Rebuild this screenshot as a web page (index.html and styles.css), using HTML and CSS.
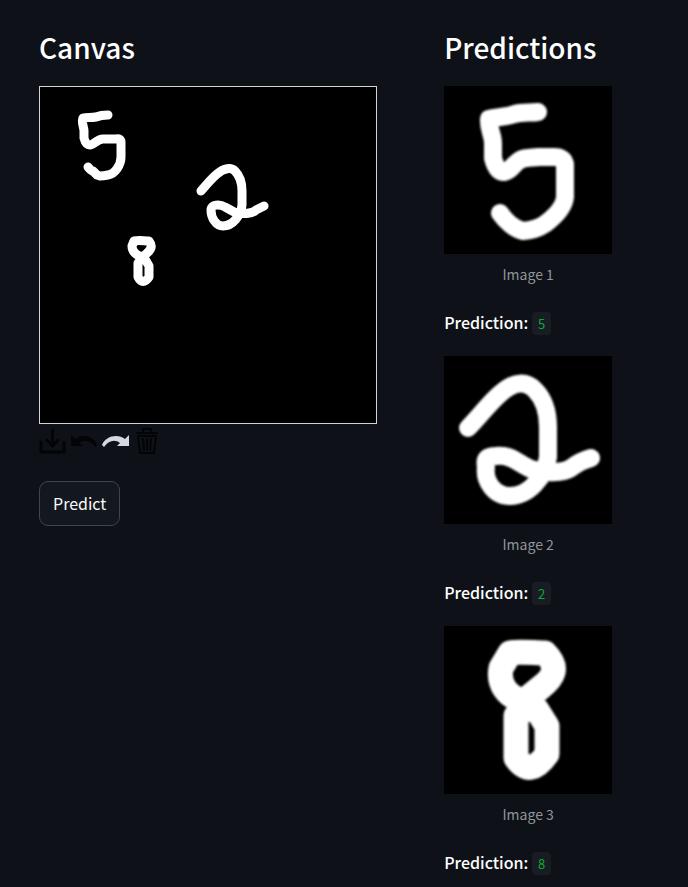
FILE: index.html
```html
<!DOCTYPE html>
<html lang="en">
<head>
<meta charset="utf-8">
<meta name="viewport" content="width=device-width, initial-scale=1">
<title>Digit recognition</title>
<link rel="stylesheet" href="styles.css">
</head>
<body>
<main class="columns">
  <section class="column">
    <h2 class="heading">Canvas</h2>
    <div class="board">
      <svg class="drawing" viewBox="40 87 336 336" role="img" aria-label="Drawing canvas">
        <g class="ink">
          <path d="M108 115C103 115 101 115 96 117C91 118 87 117 83 118C81 122 84 127 84 131V138C85 142 87 145 90 145C94 145 97 139 103 139H116Q121 138 121 142V157C121 165 115 174 108 175Q103 176 100 176L97 175L93 171Q91 171 88 167"/>
          <path d="M201 191C208 183 211 179 217 174C224 168 231 167 235 171C240 176 242 183 242 191V205C241 215 233 226 223 226C216 226 211 218 211 210C211 204 220 204 225 207L236 213C246 214 252 214 256 210L264 206"/>
          <path d="M134 241C139 240 144 241 149 241C153 246 151 250 146 254L142 257C136 255 132 252 132 246ZM142 258L138 263V277C141 283 145 283 149 277V266L145 259Z"/>
        </g>
      </svg>
    </div>
    <div class="tools">
      <button class="tool" type="button" aria-label="Download">
        <svg viewBox="0 0 28 28"><path class="line heavy" d="M2 14V24H25V14M13.500 2V17M8 12L13.500 18L19 12"/></svg>
      </button>
      <button class="tool" type="button" aria-label="Undo">
        <svg viewBox="0 0 28 28"><path d="M1 7L5 11C12 5 24 8 27 17L25 19C21 12 14 11 9 15L13 18H1Z"/></svg>
      </button>
      <button class="tool redo" type="button" aria-label="Redo">
        <svg viewBox="0 0 28 28"><path d="M28 7L24 11C17 5 4 8 1 17L3 19C8 12 14 11 19 15L16 18H28Z"/></svg>
      </button>
      <button class="tool" type="button" aria-label="Clear">
        <svg viewBox="0 0 28 28"><path class="line" d="M5 5H25M11 4V1H19V4M6 8L8 25H22L24 8ZM11 11L12 22M15 11V22M19 11L18 22"/></svg>
      </button>
    </div>
    <button class="predict" type="button">Predict</button>
  </section>

  <section class="column">
    <h2 class="heading">Predictions</h2>
    <article class="result">
      <figure class="figure">
        <svg class="digit" viewBox="0 0 168 168" role="img" aria-label="Handwritten 5">
          <path d="M94 26C86 27 78 26 71 28C62 31 52 31 45 33C44 42 49 49 49 57V72C51 80 54 86 60 86C67 85 69 78 76 74C82 71 88 72 95 71H110Q119 71 121 78V111C120 122 109 132 101 138C94 143 87 144 79 145C71 143 62 136 56 127"/>
        </svg>
        <figcaption class="caption">Image 1</figcaption>
      </figure>
      <p class="prediction"><strong>Prediction:</strong> <code class="value">5</code></p>
    </article>
    <article class="result">
      <figure class="figure">
        <svg class="digit" viewBox="0 0 168 168" role="img" aria-label="Handwritten 2">
          <path d="M24 72C36 60 46 46 57 37C71 25 82 25 91 34C100 43 104 57 104 71V101C101 122 84 140 66 140C50 140 40 125 42 111C40 102 44 100 52 100C67 98 75 108 87 113C101 118 119 117 127 112Q136 105 147 102"/>
        </svg>
        <figcaption class="caption">Image 2</figcaption>
      </figure>
      <p class="prediction"><strong>Prediction:</strong> <code class="value">2</code></p>
    </article>
    <article class="result">
      <figure class="figure">
        <svg class="digit bold" viewBox="0 0 168 168" role="img" aria-label="Handwritten 8">
          <path d="M66 27C76 25 90 27 101 27C116 42 109 52 96 62L80 75C62 71 54 57 57 42ZM80 83L72 90V132C82 146 92 144 103 128V100L93 84Z"/>
        </svg>
        <figcaption class="caption">Image 3</figcaption>
      </figure>
      <p class="prediction"><strong>Prediction:</strong> <code class="value">8</code></p>
    </article>
  </section>
</main>
</body>
</html>
```
FILE: styles.css
```css
* { box-sizing: border-box; }

body {
  margin: 0;
  background: #0e1117;
  color: #fafafa;
  font: 16px/28px "Noto Sans CJK SC", "Open Sans", sans-serif;
}

.columns {
  display: grid;
  grid-template-columns: 19fr 10fr;
  gap: 16px;
  padding: 29px 39px 0;
}

.column { min-width: 0; }

.heading {
  margin: 0 0 21px;
  color: #fff;
  font-size: 28px;
  font-weight: 500;
  line-height: 36px;
}

.board {
  max-width: 338px;
  border: 1px solid #d3d3d3;
  background: #000;
}

.drawing, .digit {
  display: block;
  width: 100%;
}

.ink, .digit path {
  fill: none;
  stroke: #fff;
  stroke-width: 9px;
  stroke-linecap: round;
  stroke-linejoin: round;
}

.tools {
  display: flex;
  gap: 3px;
  margin-top: 4px;
}

.tool {
  width: 28px;
  height: 28px;
  padding: 0;
  border: 0;
  background: none;
  color: #030406;
}

.tool svg {
  display: block;
  fill: currentColor;
}

.tool .line {
  fill: none;
  stroke: currentColor;
  stroke-width: 2px;
  stroke-linejoin: round;
  stroke-linecap: round;
}

.tool .heavy { stroke-width: 3px; }

.redo { color: #d5d8e2; }

.predict {
  margin-top: 25px;
  padding: 7px 13px 8px;
  border: 1px solid #41444c;
  border-radius: 9px;
  background: #131720;
  color: inherit;
  font: inherit;
}

.result { margin-bottom: 20px; }

.figure {
  max-width: 168px;
  margin: 0;
}

.digit { background: #000; }

.digit path {
  stroke-width: 18px;
  filter: blur(1px);
}

.digit.bold path { stroke-width: 25px; }

.caption {
  padding-top: 9px;
  color: #92959b;
  font-size: 14px;
  line-height: 22px;
  text-align: center;
}

.prediction { margin: 23px 0 0; }

.prediction strong {
  color: #fff;
  font-weight: 500;
}

.value {
  padding: 2px 6px;
  border-radius: 4px;
  background: #1a1c24;
  color: #09ab3b;
  font: 13px/17px "Noto Sans CJK SC", sans-serif;
}
```
